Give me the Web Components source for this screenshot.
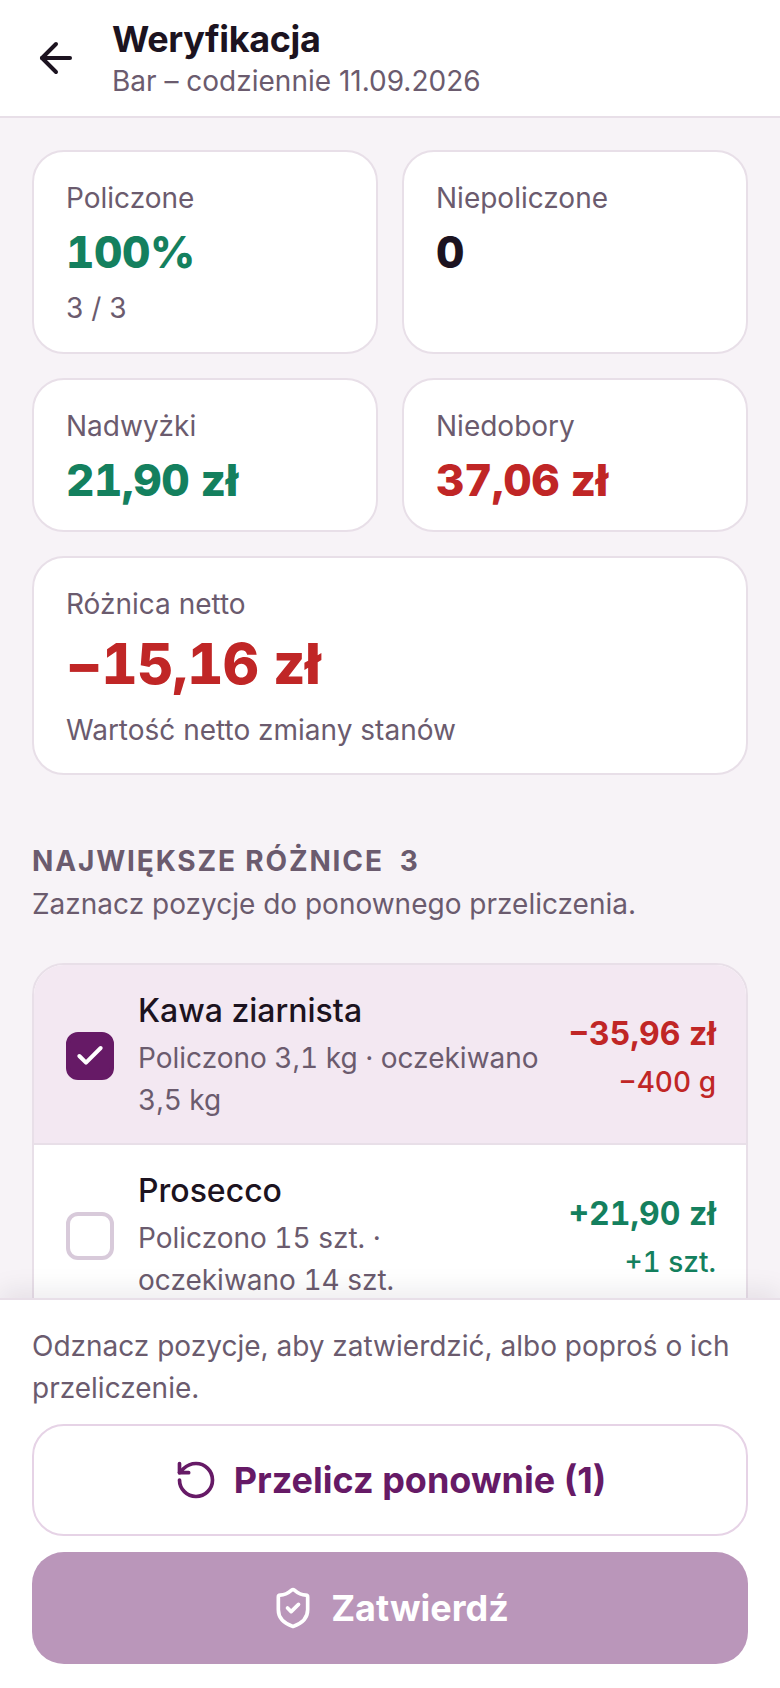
<!DOCTYPE html>
<html lang="pl"><head><meta charset="utf-8"><title>Weryfikacja</title>
<style>
html,body{margin:0;padding:0;background:#f7f3f7;font-family:Inter,"Liberation Sans",sans-serif;color:#1c1320}
</style></head><body>
<app-screen>
  <top-bar slot="header" title="Weryfikacja" sub="Bar – codziennie 11.09.2026"></top-bar>
  <stat-grid>
    <stat-card label="Policzone" value="100%" sub="3 / 3" tone="good"></stat-card>
    <stat-card label="Niepoliczone" value="0"></stat-card>
    <stat-card label="Nadwyżki" value="21,90 zł" tone="good"></stat-card>
    <stat-card label="Niedobory" value="37,06 zł" tone="bad"></stat-card>
    <stat-card wide label="Różnica netto" value="−15,16 zł" sub="Wartość netto zmiany stanów" tone="bad"></stat-card>
  </stat-grid>
  <section-head title="NAJWIĘKSZE RÓŻNICE" count="3" sub="Zaznacz pozycje do ponownego przeliczenia."></section-head>
  <diff-list>
    <diff-row checked name="Kawa ziarnista" detail="Policzono 3,1 kg · oczekiwano 3,5 kg" amount="−35,96 zł" qty="−400 g" tone="bad"></diff-row>
    <diff-row name="Prosecco" detail="Policzono 15 szt. · oczekiwano 14 szt." amount="+21,90 zł" qty="+1 szt." tone="good"></diff-row>
  </diff-list>
  <action-bar slot="footer" note="Odznacz pozycje, aby zatwierdzić, albo poproś o ich przeliczenie."></action-bar>
</app-screen>
<script>
const def=(n,css,html)=>customElements.define(n,class extends HTMLElement{
  connectedCallback(){const s=this.attachShadow({mode:'open'});
    const a=k=>this.getAttribute(k)||'';
    s.innerHTML='<style>'+css+'</style>'+html(a,this);}
});
def('app-screen',`
:host{display:flex;flex-direction:column;width:780px;height:1688px;overflow:hidden;background:#f7f3f7}
main{flex:1;min-height:0;overflow:hidden;padding:32px 32px 0;box-sizing:border-box}
footer{flex:none;position:relative;z-index:1}
`,()=>`<slot name="header"></slot><main><slot></slot></main><footer><slot name="footer"></slot></footer>`);
def('top-bar',`
:host{display:flex;flex:none;align-items:center;height:118px;box-sizing:border-box;background:#fff;border-bottom:2px solid #e8dfe8;padding:0 0 0 32px}
svg{width:48px;height:48px;flex:none;margin-right:32px}
h1{margin:0;font-size:36px;line-height:42px;font-weight:700;letter-spacing:-.01em;color:#1c1320}
p{margin:3px 0 0;font-size:28px;line-height:36px;color:#6b5b6e}
`,a=>`<svg viewBox="0 0 24 24" fill="none" stroke="#1c1320" stroke-width="2" stroke-linecap="round" stroke-linejoin="round"><path d="M19 12H5"/><path d="m12 19-7-7 7-7"/></svg><div><h1>${a('title')}</h1><p>${a('sub')}</p></div>`);
def('stat-grid',`:host{display:grid;grid-template-columns:1fr 1fr;gap:24px}`,()=>`<slot></slot>`);
def('stat-card',`
:host{display:block;background:#fff;border:2px solid #e8dfe8;border-radius:32px;padding:26px 32px 22px;box-sizing:border-box}
:host([wide]){grid-column:1/3}
.l{font-size:28px;line-height:40px;color:#6b5b6e}
.v{font-size:44px;line-height:56px;font-weight:800;letter-spacing:-.01em;margin-top:6px;font-variant-numeric:tabular-nums}
:host([wide]) .v{font-size:56px;line-height:68px;margin-top:6px}
.s{font-size:28px;line-height:40px;color:#6b5b6e;margin-top:8px;margin-bottom:2px}
:host([wide]) .s{margin-top:12px;margin-bottom:1px}
.good{color:#14805e}.bad{color:#c02626}
`,a=>`<div class="l">${a('label')}</div><div class="v ${a('tone')}">${a('value')}</div>${a('sub')?`<div class="s">${a('sub')}</div>`:''}`);
def('section-head',`
:host{display:block;margin-top:68px;margin-bottom:39px}
.t{font-size:28px;line-height:36px;font-weight:700;letter-spacing:1.85px;color:#6b5b6e;display:flex;gap:16px}
.s{font-size:28px;line-height:40px;color:#6b5b6e;margin-top:5px}
`,a=>`<div class="t"><span>${a('title')}</span><span>${a('count')}</span></div><div class="s">${a('sub')}</div>`);
def('diff-list',`:host{display:block;background:#fff;border:2px solid #e8dfe8;border-radius:32px;overflow:hidden}`,()=>`<slot></slot>`);
def('diff-row',`
:host{display:flex;align-items:center;gap:24px;padding:25px 30px 22px 32px;background:#fff;border-bottom:2px solid #e8dfe8;box-sizing:border-box}
:host([checked]){background:#f3e8f2}
.c{flex:none;width:48px;height:48px;box-sizing:border-box;border-radius:12px;border:4px solid #d8cada;background:#fff;display:flex;align-items:center;justify-content:center}
:host([checked]) .c{background:#661a66;border-color:#661a66}
.c svg{width:32px;height:32px;flex:none}
.m{flex:1;min-width:0}
.n{font-size:32px;line-height:42px;font-weight:500;color:#1c1320}
.d{font-size:28px;line-height:42px;color:#6b5b6e;margin-top:5px;font-variant-numeric:tabular-nums}
.r{flex:none;text-align:right;font-variant-numeric:tabular-nums;margin:2px 0 0 4px}
.a{font-size:32px;line-height:44px;font-weight:700}
.q{font-size:28px;line-height:40px;font-weight:500;margin-top:6px}
.good{color:#14805e}.bad{color:#c02626}
`,(a,el)=>`<div class="c">${el.hasAttribute('checked')?'<svg viewBox="0 0 24 24" fill="none" stroke="#fff" stroke-width="3" stroke-linecap="round" stroke-linejoin="round"><path d="M20 6 9 17l-5-5"/></svg>':''}</div><div class="m"><div class="n">${a('name')}</div><div class="d">${a('detail')}</div></div><div class="r ${a('tone')}"><div class="a">${a('amount')}</div><div class="q">${a('qty')}</div></div>`);
def('action-bar',`
:host{display:block;background:#fff;border-top:2px solid #e8dfe8;padding:25px 32px 24px;box-shadow:0 -8px 24px rgba(28,19,32,.08)}
p{margin:0 0 15px;font-size:28px;line-height:42px;color:#6b5b6e}
.b{display:flex;align-items:center;justify-content:center;gap:16px;box-sizing:border-box;height:112px;border-radius:32px;font-size:36px;font-weight:700}
.o{background:#fff;border:2px solid #e6d3e6;color:#661a66}
.f{background:#ba96ba;color:#fff;margin-top:16px}
svg{width:44px;height:44px;flex:none}
`,a=>`<p>${a('note')}</p>
<div class="b o"><svg viewBox="0 0 24 24" fill="none" stroke="#661a66" stroke-width="2" stroke-linecap="round" stroke-linejoin="round"><path d="M3 12a9 9 0 1 0 9-9 9.75 9.75 0 0 0-6.74 2.74L3 8"/><path d="M3 3v5h5"/></svg><span>Przelicz ponownie (1)</span></div>
<div class="b f"><svg viewBox="0 0 24 24" fill="none" stroke="#fff" stroke-width="2" stroke-linecap="round" stroke-linejoin="round"><path d="M20 13c0 5-3.5 7.5-7.66 8.95a1 1 0 0 1-.67-.01C7.5 20.5 4 18 4 13V6a1 1 0 0 1 1-1c2 0 4.5-1.2 6.24-2.72a1.17 1.17 0 0 1 1.52 0C14.51 3.81 17 5 19 5a1 1 0 0 1 1 1z"/><path d="m9 12 2 2 4-4"/></svg><span>Zatwierdź</span></div>`);
</script>
</body></html>
